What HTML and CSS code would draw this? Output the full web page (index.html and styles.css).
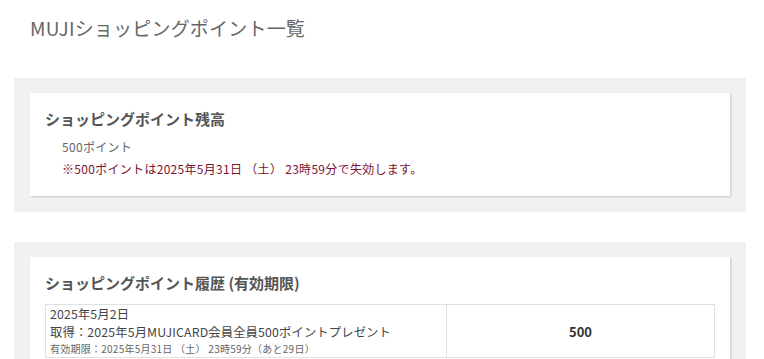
FILE: index.html
```html
<!DOCTYPE html>
<html lang="ja">
<head>
    <meta charset="UTF-8">
    <title>MUJIショッピングポイント一覧</title>
    <link rel="stylesheet" href="styles.css">
</head>
<body>

<h1 class="page-title">MUJIショッピングポイント一覧</h1>

<!--残高-->
<div class="panel">
    <div class="card">
        <h2 class="card-title">ショッピングポイント残高</h2>
        <p class="balance">500ポイント</p>
        <p class="notice">※500ポイントは2025年5月31日 （土） 23時59分で失効します。</p>
    </div>
</div>

<!--履歴-->
<div class="panel">
    <div class="card">
        <h2 class="card-title">ショッピングポイント履歴 (有効期限)</h2>
        <table class="history">
            <tr>
                <td class="detail">
                    <p>2025年5月2日</p>
                    <p>取得：2025年5月MUJICARD会員全員500ポイントプレゼント</p>
                    <p class="limit">有効期限：2025年5月31日 （土） 23時59分（あと29日）</p>
                </td>
                <td class="point">500</td>
            </tr>
        </table>
    </div>
</div>

</body>
</html>
```

FILE: styles.css
```css
* {
    margin: 0;
    padding: 0;
}

body {
    background: #fff;
    color: #666;
    font-family: "Noto Sans CJK JP", "Noto Sans", sans-serif;
    font-size: 12px;
}

.page-title {
    padding: 16px 30px 0;
    margin-bottom: 38px;
    font-size: 19px;
    font-weight: normal;
    line-height: 24px;
    color: #666;
    letter-spacing: .2px;
}

.panel {
    width: 700px;
    margin: 0 0 30px 14px;
    padding: 15px 16px 16px;
    background: #f1f1f1;
}

.card {
    padding: 15px 15px 16px;
    background: #fff;
    box-shadow: 1px 1px 2px rgba(0, 0, 0, .18);
}

.card-title {
    font-size: 15px;
    font-weight: bold;
    line-height: 22px;
    color: #555;
}

.balance,
.notice {
    padding-left: 17px;
    line-height: 22px;
    letter-spacing: .3px;
}

.balance {
    margin-top: 6px;
}

.notice {
    color: #7a1230;
}

.history {
    width: 100%;
    margin-top: 10px;
    border-collapse: collapse;
}

.history td {
    border: 1px solid #e0e0e0;
    vertical-align: middle;
}

.history .detail {
    width: 392px;
    padding: 0 4px;
    color: #444;
    font-size: 12.3px;
    line-height: 18px;
    letter-spacing: .15px;
}

.history .limit {
    font-size: 10px;
    line-height: 16px;
    color: #666;
    letter-spacing: .25px;
}

.history .point {
    text-align: center;
    font-size: 13px;
    font-weight: bold;
    color: #333;
}
```
